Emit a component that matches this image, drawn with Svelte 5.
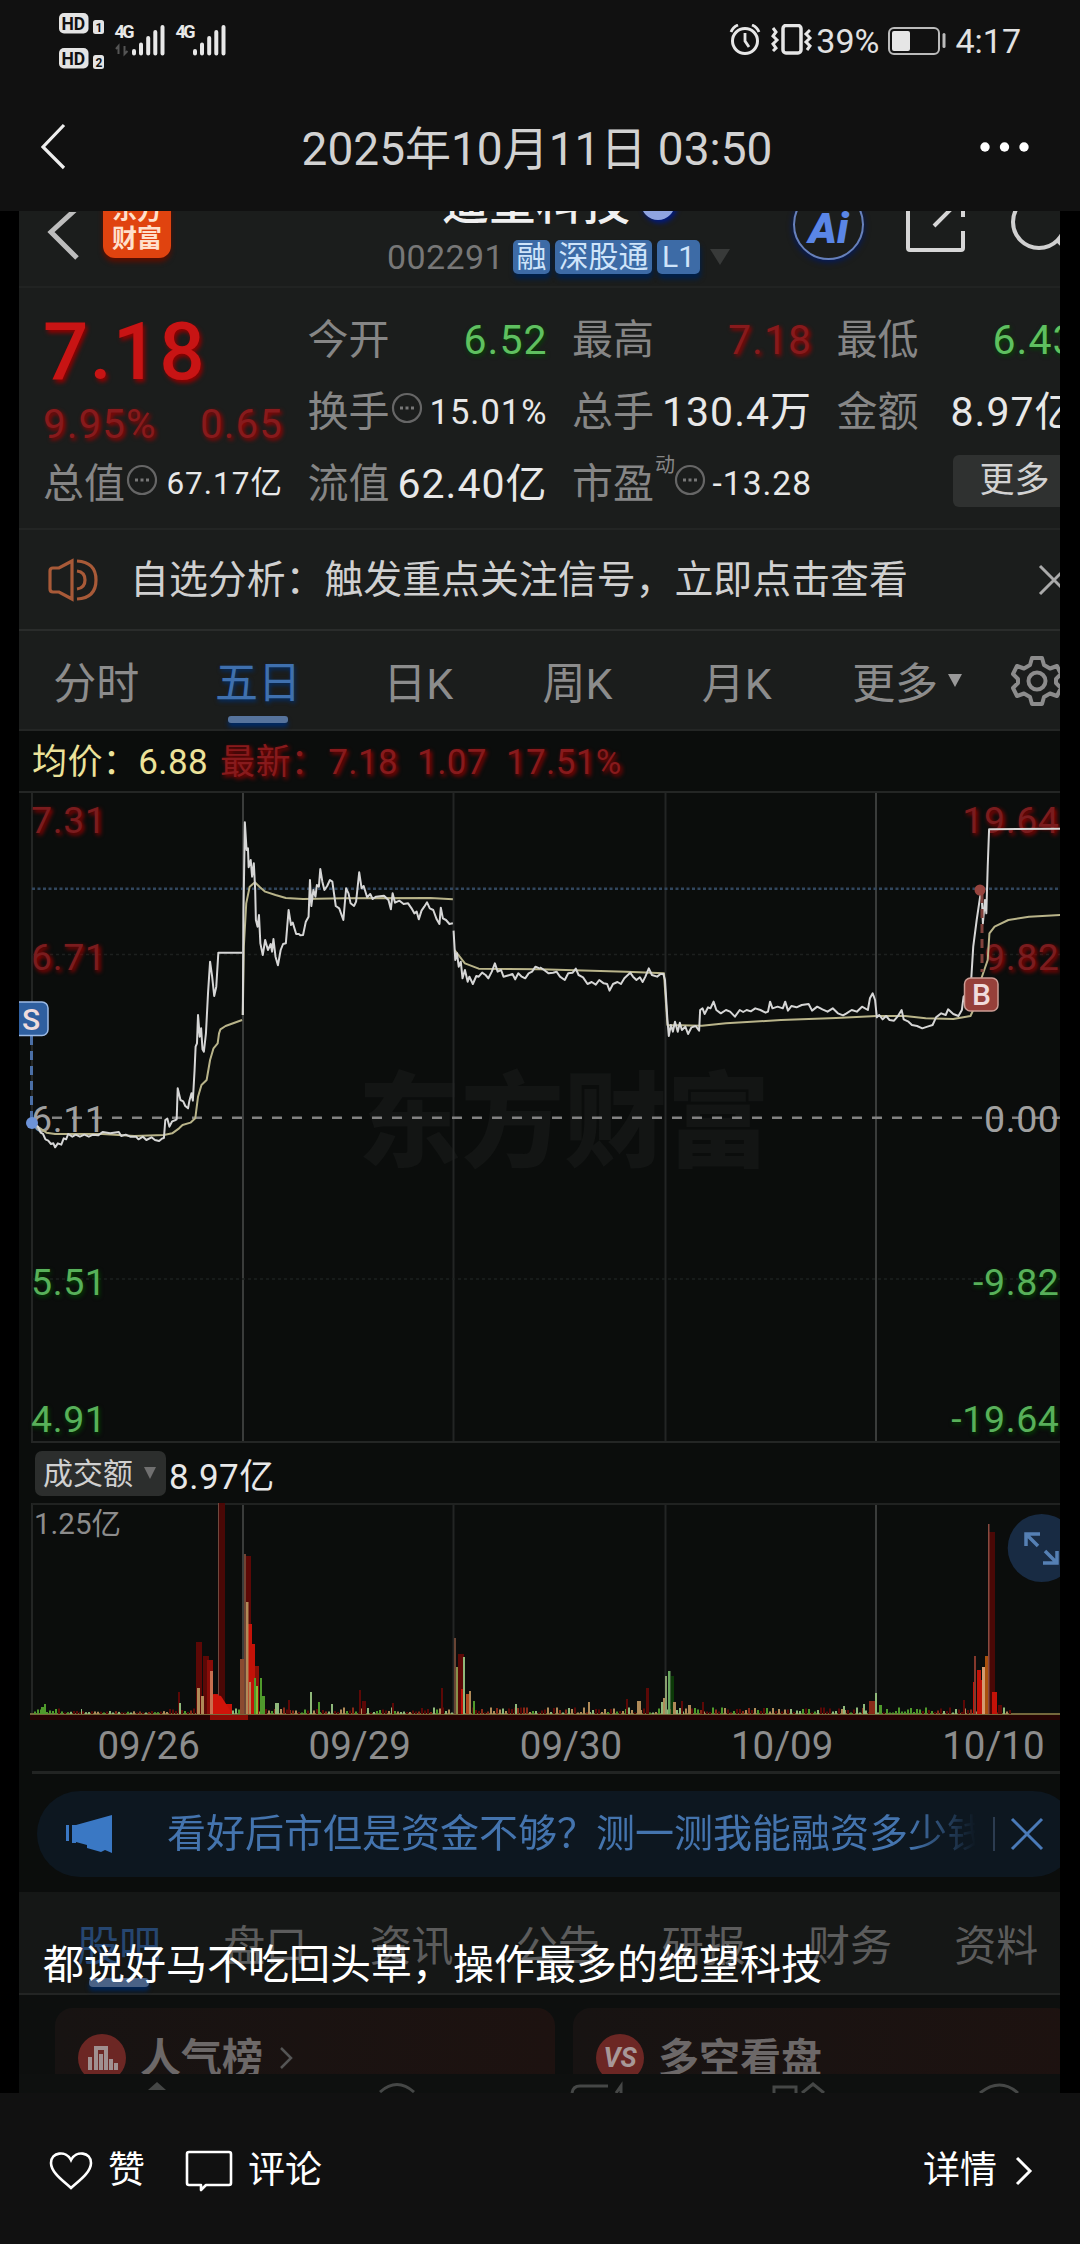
<script>
  const quotes = [
    { label: "今开", value: "6.52", tone: "down", size: 41 },
    { label: "最高", value: "7.18", tone: "up", size: 41 },
    { label: "最低", value: "6.43", tone: "down", size: 41 },
    { label: "换手", value: "15.01%", size: 34.5, info: true },
    { label: "总手", value: "130.4万", size: 41 },
    { label: "金额", value: "8.97亿", size: 41 },
    { label: "总值", value: "67.17亿", size: 31.5, info: true },
    { label: "流值", value: "62.40亿", size: 41 },
    { label: "市盈", value: "-13.28", size: 33.5, info: true, sup: "动" },
  ];

  const periods = ["分时", "五日", "日K", "周K", "月K", "更多"];
  const dates = ["09/26", "09/29", "09/30", "10/09", "10/10"];
  const sections = ["股吧", "盘口", "资讯", "公告", "研报", "财务", "资料"];

  const dayLines = [32, 243, 453.5, 665.5, 876];
  const leftScale = [
    ["7.31", 833, "up"],
    ["6.71", 970, "up"],
    ["6.11", 1132, "flat"],
    ["5.51", 1295, "down"],
    ["4.91", 1431.5, "down"],
  ];
  const rightScale = [
    ["19.64", 833, "up"],
    ["9.82", 970, "up"],
    ["0.00", 1132, "flat"],
    ["-9.82", 1295, "down"],
    ["-19.64", 1431.5, "down"],
  ];

  // each half of the chart is plotted on a 1568-unit wide grid
  const priceLeft = [
    "95,1030 110,1040 118,1058 125,1062 132,1078 140,1082 148,1092 155,1090 160,1102 168,1090 178,1094 185,1075 192,1078 198,1062 210,1070 220,1064 232,1070 245,1064 258,1070 270,1064 285,1066 298,1056 320,1060 345,1056 352,1068 365,1064 378,1070 395,1070 402,1078 415,1070 425,1080 440,1072 450,1080 462,1083 470,1076 476,1074 480,1020 486,1016 492,1040 500,1024 510,1020 513,1018 516,925 524,960 532,964 538,978 546,985 550,962 556,940 560,962 565,870 568,800 572,790 575,705 580,770 584,745 588,808 592,815 598,760 604,640 610,545 616,590 622,648 628,620 634,518 703,518",
    "705,705 707,400 711,127 716,210 720,205 722,262 728,240 732,290 737,250 741,330 743,420 748,440 752,405 756,490 763,525 770,480 778,510 786,492 790,515 794,477 800,530 807,556 815,510 822,492 830,490 838,390 845,435 850,428 860,462 868,462 872,466 880,465 888,425 896,410 900,300 904,378 910,330 916,350 920,315 926,320 930,267 936,305 942,330 950,318 958,300 965,305 975,378 985,385 997,420 1005,325 1012,340 1018,370 1028,378 1034,365 1043,277 1050,325 1056,318 1066,352 1075,342 1082,357 1092,350 1115,347 1128,360 1135,388 1140,340 1147,368 1160,362 1172,372 1185,370 1195,385 1203,400 1210,395 1216,418 1224,392 1232,380 1240,367 1248,385 1258,390 1268,418 1276,432 1280,383 1286,415 1295,420 1305,432 1315,430",
    "1317,452 1322,540 1327,520 1332,560 1338,545 1343,595 1350,570 1358,605 1363,590 1373,612 1383,588 1390,590 1400,578 1410,585 1418,595 1428,575 1437,550 1445,575 1455,570 1462,590 1480,585 1488,582 1496,598 1505,580 1515,590 1525,595 1535,580 1545,575 1555,560 1568,566",
  ];
  const priceRight = [
    "0,562 12,570 25,580 38,578 48,575 58,590 72,600 82,580 95,578 104,566 112,585 125,592 138,612 150,606 162,614 172,600 185,610 195,612 202,632 212,612 225,606 235,612 245,595 262,578 270,590 280,600 290,592 298,606 306,590 316,565 325,585 340,590 350,582 358,582 363,600 370,720 374,768 380,735 386,755 392,725 400,755 406,728 412,750 422,740 430,762 440,742 452,738 462,752 465,690 472,685 478,702 488,682 495,685 504,665 512,690 525,700 540,690 552,695 566,710 580,690 590,696 600,690 612,694 625,685 640,690 655,698 662,695 668,665 675,685 690,680 705,685 712,665 720,692 730,678 745,682 760,675 780,672 790,692 805,680 820,688 835,695 850,685 865,700 880,706 890,700 905,690 920,695 935,680 952,690 958,655 966,640 973,660 978,712 985,705 995,718 1005,708 1015,720 1028,722 1038,710 1050,690 1056,718 1070,725 1080,735 1095,738 1110,745 1125,740 1140,735 1150,712 1165,700 1178,705 1185,688 1200,702 1215,708 1225,690 1230,650 1240,640 1252,600 1258,500 1268,420 1278,350 1282,330 1286,430 1292,360 1296,400 1300,260 1304,148 1510,146",
  ];
  const avgLeft = [
    "95,1030 112,1042 135,1058 160,1062 298,1062 390,1068 476,1065 500,1060 520,1045 530,1035 553,1028 567,1015 575,950 585,915 600,900 610,840 620,805 632,790 636,760 640,748 655,738 703,720",
    "705,705 708,500 715,370 725,320 740,307 755,322 770,335 800,345 830,354 880,357 1000,355 1250,354 1315,358",
    "1320,510 1350,550 1390,566 1568,568",
  ];
  const avgRight = [
    "0,568 250,575 360,580 370,735 470,737 540,730 700,720 860,714 978,708 1060,708 1120,715 1200,717 1250,708 1258,690 1280,600 1300,540 1305,460 1320,440 1360,420 1420,410 1510,405",
  ];

  // x, height, width, colour
  const R = "#c41208", D = "#5c0806", T = "#b08a58", G = "#4f9a2c", L = "#8fb87a";
  const spikes = [
    [44, 10, 2, G], [41, 7, 4, G], [81, 5, 1, L],
    [178, 22, 2, D], [179, 11, 2, L],
    [196, 72, 6, D], [203, 58, 6, D], [197, 26, 3, T], [201, 18, 3, T],
    [207, 54, 6, "#8a0c08"], [210, 43, 3, "#c87050"], [214, 20, 10, R], [224, 10, 8, R],
    [219, 212, 6, "#4a0806"], [218, 212, 1, "#70483e"],
    [240, 55, 4, "#8a4a30"], [245, 158, 6, D], [244, 160, 2, "#704434"],
    [248, 90, 4, R], [251, 70, 4, R], [255, 48, 4, "#8a1008"], [246, 112, 2.5, T],
    [249, 32, 2, T], [254, 36, 2, G], [256, 28, 2, "#8ab832"], [260, 36, 2, G], [262, 18, 3, G],
    [275, 11, 4, L], [288, 14, 2, D], [310, 22, 2, L], [318, 12, 2, G], [331, 10, 2, L],
    [359, 24, 2, D], [362, 13, 4, D], [392, 11, 2, D], [441, 26, 2, D],
    [454, 76, 2, "#684434"], [458, 60, 6, D], [456, 47, 2, "#88904c"], [461, 25, 4, R],
    [463, 57, 2, L], [466, 20, 3, "#b04a20"], [469, 23, 2, T], [473, 13, 2, G], [515, 10, 2, L],
    [588, 12, 2, T], [626, 15, 2, D], [637, 13, 4, T], [646, 26, 3, D], [661, 12, 2, L], [663, 16, 3, T],
    [665, 38, 2, "#8aa070"], [668, 43, 2.5, "#6aa860"], [671, 38, 3, "#0c3a08"], [673, 12, 3, T], [681, 13, 2, D], [688, 9, 3, T], [702, 12, 2, D],
    [843, 8, 2, L], [863, 10, 2, L], [869, 13, 6, "#8a2a18"], [875, 21, 2, L], [879, 9, 3, G],
    [963, 14, 2, D], [973, 32, 3, R], [974, 58, 2, "#84382c"], [977, 44, 4, R], [980, 34, 4, R],
    [982, 47, 3, "#d49a70"], [985, 58, 4, "#a8500e"], [989, 182, 6, "#4a0806"], [988, 190, 1.5, "#8a4a40"], [992, 22, 5, R], [998, 9, 4, D],
  ];
  const noise = [];
  let seed = 7;
  for (let x = 34; x < 1010; x += 3) {
    seed = (seed * 73 + 41) % 997;
    const tone = x < 54 ? G : x > 885 && x < 920 ? G : [D, T, L, D, "#8a2a18", G][seed % 6];
    const tall = x > 60 && x < 165 ? 0.15 : 0.5;
    noise.push([x, 1.5 + (seed % 11) * tall, 2, tone]);
  }
</script>

<div class="screen">
  <header class="status">
    <svg class="radios" width="180" height="72" viewBox="54 0 180 72">
      {#each [[13, "1"], [48, "2"]] as [y, n]}
        <rect x="59" {y} width="29.500" height="20.500" rx="5" fill="#e4e4e4" />
        <text x="61.500" y={y + 16.5} class="hd">HD</text>
        <rect x="93" y={y + 7} width="11" height="14" rx="2.500" fill="#e4e4e4" />
        <text x="95.500" y={y + 18.5} class="sim">{n}</text>
      {/each}
      {#each [0, 61] as dx}
        <text x={114.5 + dx} y="38" class="net">4G</text>
        <path
          transform="translate({dx})"
          d="M134 51v2.500M141 44.500v9M148.200 38v15.500M155.300 32v21.500M162.500 27v26.500"
          stroke="#e8e8e8" stroke-width="4" stroke-linecap="round" />
      {/each}
      <path d="M118.500 54V46l-2.500 3M124.500 46v8l3-3" stroke="#555" stroke-width="2" fill="none" />
    </svg>
    <div class="power">
      <svg width="84" height="34" viewBox="729 25 84 34" fill="none" stroke="#e6e6e6">
        <circle cx="745" cy="42" r="12.500" stroke-width="3" />
        <path d="M745 34v8l4 6M731 33q2-5 7-7M759 33q-2-5-7-7" stroke-width="2.800" />
        <rect x="783" y="26.500" width="18" height="27.500" rx="3" stroke-width="3.500" />
        <path d="M773 29l3 4-3 4 4 4-4 4 3 4-3 3M810 31l-4 4 4 4-4 4 4 4-3 4" stroke-width="3" />
      </svg>
      <span>39%</span>
      <svg width="60" height="30" viewBox="889 26 60 30">
        <rect x="890" y="28" width="50" height="26" rx="5" fill="none" stroke="#bbb" stroke-width="2" />
        <rect x="893" y="31" width="18" height="20" rx="2" fill="#e6e6e6" />
        <rect x="943.500" y="33" width="3" height="15" rx="1.500" fill="#bbb" />
      </svg>
      <span>4:17</span>
    </div>
  </header>

  <nav class="topbar">
    <svg width="30" height="52" viewBox="0 0 30 52"><path d="M26 4L5 26l21 21" fill="none" stroke="#eee" stroke-width="3.200" /></svg>
    <h1>2025年10月11日 03:50</h1>
    <svg width="50" height="12" viewBox="0 0 50 12" fill="#fff"><circle cx="5" cy="6" r="4.700" /><circle cx="24.500" cy="6" r="4.700" /><circle cx="44" cy="6" r="4.700" /></svg>
  </nav>

  <main class="photo">
    <div class="apphead">
      <svg class="back" width="34" height="50" viewBox="0 0 34 50"><path d="M28 -2L4 20l26 26" fill="none" stroke="#bdbdbd" stroke-width="5" /></svg>
      <div class="logo">东方<br />财富</div>
      <div class="stock">
        <div class="name">遥望科技<i></i></div>
        <div class="code">
          <span>002291</span><b>融</b><b>深股通</b><b>L1</b>
          <svg width="20" height="16" viewBox="0 0 20 16"><path d="M0 0h20L10 16z" fill="#383a39" /></svg>
        </div>
      </div>
      <div class="ai">Ai</div>
      <svg class="share" width="62" height="70" viewBox="0 0 62 70" fill="none" stroke="#d6d6d6" stroke-width="4"><path d="M30 12H5q-2 0-2 3v50q0 2 2 2h51q2 0 2-2V48M29 43L58 14M42 12h16v22" /></svg>
      <svg class="search" width="70" height="70" viewBox="0 0 70 70" fill="none" stroke="#d0d0d0" stroke-width="4"><circle cx="30" cy="30" r="26" /><path d="M48 48l14 14" /></svg>
    </div>

    <section class="quotes">
      <div class="last">
        <strong>7.18</strong>
        <p><span>9.95%</span><span>0.65</span></p>
      </div>
      {#each quotes as q}
        <div class="quote">
          <span class="label">{q.label}</span>
          {#if q.sup}<sup>{q.sup}</sup>{/if}
          {#if q.info}
            <svg class="info" width="32" height="32" viewBox="0 0 32 32"><circle cx="16" cy="16" r="14" fill="none" stroke="#666" stroke-width="2.200" /><path d="M9 16h3M14.500 16h3M20 16h3" stroke="#777" stroke-width="3" /></svg>
          {/if}
          <span class="value {q.tone}" style="font-size:{q.size}px">{q.value}</span>
        </div>
      {/each}
      <div class="more"><button>更多</button></div>
    </section>

    <section class="notice">
      <svg width="54" height="44" viewBox="0 0 54 44" fill="none" stroke="#a85a38" stroke-width="3.200">
        <path d="M3 13q0-3 3-3h6L25 3v38L12 34H6q-3 0-3-3z" /><path d="M30 13q8 1 8 9t-8 9M30 3q19 1 19 19T30 41" />
      </svg>
      <p>自选分析：触发重点关注信号，立即点击查看</p>
      <svg width="32" height="32" viewBox="0 0 32 32"><path d="M2 2l28 28M30 2L2 30" stroke="#aaa" stroke-width="3" /></svg>
    </section>

    <section class="periods">
      {#each periods as p, i}
        <div class="period" class:active={i === 1}>
          <span>{p}</span>
          {#if i === 5}<svg width="14" height="13" viewBox="0 0 14 13"><path d="M0 0h14L7 13z" fill="#999" /></svg>{/if}
        </div>
      {/each}
      <svg width="52" height="52" viewBox="-26 -26 52 52" fill="none" stroke="#8c8c8c" stroke-width="4">
        <circle r="8.500" />
        <path d="M-5-23H5L7-16L13-12.500L20-15L24-7L19-2V2L24 7L20 15L13 12.500L7 16L5 23H-5L-7 16L-13 12.500L-20 15L-24 7L-19 2V-2L-24-7L-20-15L-13-12.500L-7-16Z" stroke-linejoin="round" />
      </svg>
    </section>

    <p class="summary"><span class="avg">均价：6.88</span><span class="up latest">最新：</span><span class="up">7.18</span><span class="up">1.07</span><span class="up">17.51%</span></p>

    <svg class="chart" width="1041" height="652" viewBox="19 791 1041 652">
      <text x="358" y="1159" class="mark">东方财富</text>
      {#each dayLines as x, i}
        <path d="M{x} 791V1443" stroke={i === 1 || i === 4 ? "#3a3c3b" : "#232524"} stroke-width="2" />
      {/each}
      <path d="M19 792H1060M32 1442H1060" stroke="#242625" stroke-width="2" />
      <path d="M32 888.700H1060" stroke="#31465e" stroke-width="2.500" stroke-dasharray="3 2.500" />
      <path d="M32 954.500H1060M32 1279H1060" stroke="#1d201f" stroke-width="1.500" stroke-dasharray="3 3" />
      <path d="M52 1117.700H1060" stroke="#828282" stroke-width="2.500" stroke-dasharray="10 10" />
      {#each leftScale as [label, y, tone]}
        <text x="31" {y} class="scale {tone}">{label}</text>
      {/each}
      {#each rightScale as [label, y, tone]}
        <text x="1059.500" {y} class="scale end {tone}">{label}</text>
      {/each}
      <g class="lines" transform="translate(0 780) scale(0.34439 0.33333)">
        {#each avgLeft as points}<polyline class="mean" {points} />{/each}
        {#each priceLeft as points}<polyline {points} />{/each}
      </g>
      <g class="lines" transform="translate(540 780) scale(0.34439 0.33333)">
        {#each avgRight as points}<polyline class="mean" {points} />{/each}
        {#each priceRight as points}<polyline {points} />{/each}
      </g>
      <path d="M31.500 1036V1120" stroke="#4b6fa6" stroke-width="3" stroke-dasharray="9 6" />
      <circle cx="32" cy="1123" r="6" fill="#6d93d8" />
      <rect x="10" y="1002" width="38" height="33.500" rx="6" fill="#2f5f9f" stroke="#9dbbe6" stroke-width="1.500" />
      <text x="31" y="1029.500" class="flag">S</text>
      <path d="M982 894V972" stroke="#80423c" stroke-width="3" stroke-dasharray="9 6" />
      <circle cx="980" cy="890" r="5.500" fill="#96443e" />
      <rect x="964.500" y="978" width="33.500" height="33" rx="6" fill="#96403a" stroke="#cc9c94" stroke-width="1.500" />
      <text x="981.500" y="1005" class="flag">B</text>
    </svg>

    <div class="turnover">
      <span class="pick">成交额<svg width="12" height="12" viewBox="0 0 12 12"><path d="M0 0h12L6 12z" fill="#707070" /></svg></span>
      <span>8.97亿</span>
    </div>

    <svg class="volume" width="1041" height="217" viewBox="19 1503 1041 217">
      {#each dayLines as x, i}
        <path d="M{x} 1503V1714" stroke={i === 1 || i === 4 ? "#3a3c3b" : "#232524"} stroke-width="2" />
      {/each}
      <path d="M32 1504H1060" stroke="#202221" stroke-width="2" />
      <rect x="30" y="1715" width="1030" height="5" fill="#260403" />
      <rect x="210" y="1715" width="38" height="5" fill="#8a0c06" />
      <rect x="30" y="1713" width="1030" height="2" fill="#75683c" />
      {#each [...noise, ...spikes] as [x, h, w, fill]}
        <rect {x} y={1714 - h} width={w} height={h} {fill} />
      {/each}
      <path d="M213 1714V1694L221 1696L230 1710V1714Z" fill="#d0140a" />
      <text x="34" y="1534" class="peak">1.25亿</text>
      <circle cx="1041.700" cy="1548" r="34" fill="#182b43" />
      <path d="M1026 1546V1534h14M1027 1535l11 11M1057 1551v12h-14M1056 1562l-11-11" fill="none" stroke="#5580b4" stroke-width="3.500" />
    </svg>

    <div class="dates">
      {#each dates as d}<span>{d}</span>{/each}
    </div>

    <div class="promo">
      <svg width="48" height="40" viewBox="0 0 48 40" fill="#3a78c4"><path d="M0 11h3v16H0zM6 11h4v18H6zM10 11L46 1v38l-7-3-4 2-14-4v-3L10 28z" /></svg>
      <p>看好后市但是资金不够？测一测我能融资多少钱</p>
      <i></i>
      <svg width="34" height="34" viewBox="0 0 34 34"><path d="M2 2l30 30M32 2L2 32" stroke="#4a7ab8" stroke-width="3" /></svg>
    </div>

    <div class="sections">
      {#each sections as s, i}<span class:active={i === 0}>{s}</span>{/each}
      <p class="caption">都说好马不吃回头草，操作最多的绝望科技</p>
    </div>

    <div class="cards">
      <div class="card">
        <svg width="48" height="48" viewBox="0 0 48 48"><circle cx="24" cy="24" r="24" fill="#6c2724" /><path d="M12 36V23M18 36V14h10v22M23 20v16M33 36V25M38 36v-7" fill="none" stroke="#a09090" stroke-width="4" /></svg>
        <span>人气榜</span>
        <svg width="14" height="24" viewBox="0 0 14 24"><path d="M2 2l10 10L2 22" fill="none" stroke="#555" stroke-width="2.500" /></svg>
      </div>
      <div class="card">
        <div class="vs">VS</div>
        <span>多空看盘</span>
      </div>
    </div>
    <svg class="tabbar" width="1041" height="19" viewBox="19 2074 1041 19" fill="none" stroke="#454746" stroke-width="3">
      <path d="M148 2090l9-8 9 8z" fill="#454746" stroke="none" />
      <path d="M380 2092q17-15 34 0M572 2093q1-7 8-7h28M616 2093l5-7v7M774 2093v-6h22v6M802 2093l11-9 11 9M980 2093q20-16 38 0" />
    </svg>
  </main>

  <footer>
    <svg width="44" height="40" viewBox="0 0 44 40"><path d="M22 37C13 29 2 21 2 12C2 1 17-1 22 9C27-1 42 1 42 12C42 21 31 29 22 37z" fill="none" stroke="#fff" stroke-width="2.600" /></svg>
    <span class="like">赞</span>
    <svg width="48" height="42" viewBox="0 0 48 42"><path d="M4 2H44q2 0 2 2V33q0 2-2 2H21l-5 5v-5H4q-2 0-2-2V4q0-2 2-2z" fill="none" stroke="#fff" stroke-width="2.600" stroke-linejoin="round" /></svg>
    <span class="comment">评论</span>
    <span class="detail">详情</span>
    <svg width="18" height="30" viewBox="0 0 18 30"><path d="M2 2l13 13L2 28" fill="none" stroke="#fff" stroke-width="3" /></svg>
  </footer>
</div>

<style>
  :global(body) {
    background: #000;
  }
  .screen {
    width: 1080px;
    height: 2244px;
    overflow: hidden;
    background: #000;
    color: #e8e8e8;
    font-family: Roboto, "Noto Sans CJK SC", sans-serif;
  }
  svg {
    display: block;
    flex: none;
  }
  p,
  h1 {
    margin: 0;
  }

  /* system bar and title */
  .status {
    height: 82px;
    background: #111;
    display: flex;
    justify-content: space-between;
    align-items: flex-start;
    padding: 0 59px 0 54px;
  }
  .hd {
    font-size: 17.5px;
    font-weight: 700;
    fill: #111;
  }
  .sim {
    font-size: 12px;
    font-weight: 700;
    fill: #111;
  }
  .net {
    font-size: 18px;
    font-weight: 700;
    fill: #e8e8e8;
    letter-spacing: -2.5px;
  }
  .power {
    display: flex;
    align-items: center;
    height: 82px;
    font-size: 34px;
    color: #e2e2e2;
  }
  .power span:nth-of-type(1) {
    margin: 0 9px 0 3px;
  }
  .power span:nth-of-type(2) {
    margin-left: 7px;
  }
  .topbar {
    height: 129px;
    box-sizing: border-box;
    background: #111;
    display: flex;
    justify-content: space-between;
    align-items: center;
    padding: 0 50px 0 38px;
  }
  .topbar h1 {
    font-size: 46px;
    font-weight: 400;
    color: #d2d2d2;
    line-height: 60px;
    padding: 5px 0 0 26px;
  }

  .photo {
    margin: 0 20px 0 19px;
    height: 1882px;
    overflow: hidden;
    background: #0b0d0c;
    display: flex;
    flex-direction: column;
  }
  .up {
    color: #871a1c;
    fill: #7a1c1e;
    text-shadow: 2px 2px 4px #a00000;
  }
  .down {
    color: #5fc060;
    fill: #58b05a;
    text-shadow: 1px 2px 4px #004800;
  }
  .flat {
    fill: #a0a0a0;
  }

  /* app header, its upper part runs out of view */
  .apphead {
    height: 77px;
    flex: none;
    box-sizing: border-box;
    background: #1b1d1c;
    border-bottom: 2px solid #212322;
    display: flex;
    align-items: flex-end;
    overflow: hidden;
  }
  .back {
    margin: 0 22px 24px 28px;
  }
  .logo {
    flex: none;
    width: 68px;
    height: 68px;
    margin-bottom: 28px;
    border-radius: 12px;
    background: #e0430f;
    color: #ffe0cc;
    font-size: 25px;
    font-weight: 700;
    line-height: 28px;
    text-align: center;
    padding-top: 7px;
    box-sizing: border-box;
    box-shadow: 0 4px 5px #5a0f00;
  }
  .stock {
    width: 345px;
    margin: 0 0 11px 216px;
    flex: none;
  }
  .name {
    display: flex;
    align-items: center;
    font-size: 47px;
    line-height: 52px;
    font-weight: 500;
    color: #f0f0f0;
    padding-left: 55px;
    margin-bottom: 10px;
  }
  .name i {
    width: 34px;
    height: 34px;
    border-radius: 50%;
    background: #8fa4e0;
    margin: 0 0 1px 11px;
    box-shadow: 2px 3px 5px #001a80;
  }
  .code {
    display: flex;
    align-items: center;
    height: 36px;
    color: #777;
    font-size: 34px;
  }
  .code span {
    width: 126px;
    letter-spacing: 0.4px;
  }
  .code b {
    background: #3d6ba6;
    color: #cfe4fa;
    font-weight: 400;
    font-size: 30px;
    line-height: 34px;
    border-radius: 5px;
    padding: 0 3.5px;
    margin-right: 5px;
    box-shadow: 1px 5px 5px #00204a;
  }
  .code b:nth-of-type(3) {
    padding: 0 5px;
  }
  .code svg {
    margin-left: 5px;
  }
  .ai {
    flex: none;
    width: 67px;
    height: 67px;
    margin: 0 0 26px 61px;
    border: 2.5px solid #6680bc;
    border-radius: 50%;
    color: #5a86e6;
    font: italic 900 43px/74px Roboto, sans-serif;
    text-align: center;
    box-shadow: 0 2px 6px #001a66;
  }
  .share {
    margin: 0 0 33px 41px;
  }
  .search {
    margin: 0 0 24px 42px;
  }

  .quotes {
    height: 242px;
    flex: none;
    box-sizing: border-box;
    padding: 16px 0 0 24px;
    background: #1b1d1c;
    border-bottom: 2px solid #232524;
    display: grid;
    grid-template-columns: repeat(4, 240px);
    grid-template-rows: repeat(3, 72px);
    column-gap: 24.5px;
  }
  .last {
    grid-row: 1 / 3;
  }
  .last strong {
    display: block;
    font-size: 80px;
    line-height: 96px;
    font-weight: 500;
    color: #c81414;
    text-shadow: 2px 3px 4px #900000;
    letter-spacing: 1px;
  }
  .last p {
    display: flex;
    justify-content: space-between;
    font-size: 40.5px;
    line-height: 48px;
    color: #871a1c;
    text-shadow: 2px 2px 4px #a00000;
    letter-spacing: 1px;
  }
  .quote {
    display: flex;
    align-items: center;
    white-space: nowrap;
  }
  .label {
    font-size: 41px;
    line-height: 60px;
    color: #868686;
  }
  .quote sup {
    font-size: 20px;
    line-height: 24px;
    margin: 0 -2px 38px 1px;
    color: #868686;
  }
  .info {
    margin: 0 0 9px 1px;
  }
  .value {
    margin-left: auto;
    line-height: 60px;
    letter-spacing: 1px;
  }
  .more {
    display: flex;
    justify-content: flex-end;
    align-items: center;
  }
  .more button {
    width: 124px;
    height: 52px;
    padding: 0;
    border: 0;
    border-radius: 6px;
    background: #2f3130;
    color: #d2d2d2;
    font: 35px/52px Roboto, "Noto Sans CJK SC", sans-serif;
    margin-bottom: 6px;
  }

  .notice {
    height: 101px;
    flex: none;
    box-sizing: border-box;
    background: #1b1d1c;
    border-bottom: 2px solid #2a2c2b;
    display: flex;
    align-items: center;
    padding-left: 28px;
  }
  .notice p {
    width: 908px;
    margin-left: 29px;
    flex: none;
    font-size: 38.9px;
    line-height: 60px;
    padding-top: 1px;
    color: #d0d0d0;
  }

  .periods {
    height: 100px;
    flex: none;
    box-sizing: border-box;
    background: #1b1d1c;
    border-bottom: 2px solid #242625;
    display: grid;
    grid-template-columns: repeat(6, 159.3px) 80px;
  }
  .periods > svg {
    margin: 24px 0 0 36px;
  }
  .period {
    display: flex;
    align-items: center;
    justify-content: center;
    gap: 10px;
    font-size: 43px;
    line-height: 60px;
    color: #8c8c8c;
    padding: 7px 5px 0 0;
  }
  .period:nth-child(n + 3) {
    padding: 7px 0 0 2px;
  }
  .period:nth-child(6) {
    padding-left: 24px;
  }
  .period:nth-child(6) svg {
    margin-bottom: 6px;
  }
  .period.active {
    display: grid;
    justify-items: center;
    align-content: end;
    gap: 3px;
    padding: 0 0 6px;
    color: #3f70ae;
    text-shadow: 1px 2px 4px #003070;
  }
  .period.active::after {
    content: "";
    width: 60px;
    height: 7px;
    border-radius: 3px;
    background: #56739c;
    box-shadow: 0 4px 4px #002a66;
  }

  .summary {
    height: 60px;
    flex: none;
    display: flex;
    padding-left: 13px;
    font-size: 35px;
    line-height: 63px;
    white-space: nowrap;
    letter-spacing: 0.4px;
  }
  .avg {
    color: #ece29a;
    margin-right: 12px;
  }
  .summary .up {
    margin-right: 19px;
  }
  .summary .latest {
    margin-right: 2px;
  }

  .scale {
    font-size: 37.5px;
    letter-spacing: 0.6px;
  }
  .end {
    text-anchor: end;
  }
  .mark {
    font-size: 103px;
    font-weight: 900;
    fill: #131514;
  }
  .lines polyline {
    fill: none;
    stroke: #d6d6d6;
    stroke-width: 2px;
    stroke-linejoin: round;
    vector-effect: non-scaling-stroke;
  }
  .lines .mean {
    stroke: #b9b48a;
  }
  .flag {
    font-size: 30px;
    font-weight: 500;
    fill: #f0dcdc;
    text-anchor: middle;
  }

  .turnover {
    height: 60px;
    flex: none;
    display: flex;
    align-items: center;
    padding-left: 16px;
    gap: 3px;
    font-size: 35px;
    letter-spacing: 0.5px;
  }
  .pick {
    box-sizing: border-box;
    width: 131px;
    height: 45px;
    line-height: 45px;
    border-radius: 7px;
    background: #2c2e2d;
    padding: 0 10px 0 8px;
    display: flex;
    align-items: center;
    justify-content: space-between;
    font-size: 30px;
    letter-spacing: 0;
    color: #d0d0d0;
  }
  .peak {
    font-size: 29.5px;
    fill: #8c8c8c;
  }
  .dates {
    height: 54px;
    flex: none;
    box-sizing: border-box;
    margin-left: 13px;
    padding-left: 11px;
    border-bottom: 3px solid #222423;
    display: grid;
    grid-template-columns: repeat(5, 211.2px);
    text-align: center;
    font-size: 38.5px;
    line-height: 51px;
    color: #8c8c8c;
  }

  .promo {
    flex: none;
    box-sizing: border-box;
    width: 1039px;
    height: 86px;
    margin: 17px 0 15px 18px;
    border-radius: 43px;
    background: #0d1720;
    display: flex;
    align-items: center;
    padding-left: 29px;
  }
  .promo p {
    width: 809px;
    flex: none;
    overflow: hidden;
    white-space: nowrap;
    margin: 0 17px 0 53px;
    font-size: 39px;
    line-height: 60px;
    color: #4474ae;
    mask-image: linear-gradient(90deg, #000 92%, transparent);
  }
  .promo i {
    width: 2px;
    height: 34px;
    margin-right: 15px;
    background: #2c3c50;
  }

  .sections {
    height: 103px;
    flex: none;
    box-sizing: border-box;
    position: relative;
    background: #151716;
    border-bottom: 2px solid #232524;
    display: grid;
    grid-template-columns: repeat(7, 146.2px);
    padding-left: 27px;
    text-align: center;
    font-size: 42px;
    line-height: 109px;
    color: #5c5c5c;
  }
  .sections .active {
    color: #264670;
  }
  .sections .active::after {
    content: "";
    display: block;
    width: 60px;
    height: 9px;
    margin: -23px auto 0;
    border-radius: 4px;
    background: #4a6286;
    box-shadow: 0 4px 4px #002454;
  }
  /* post text laid over the picture */
  .caption {
    position: absolute;
    left: 24px;
    top: 43px;
    font-size: 41px;
    line-height: 60px;
    color: #fff;
    white-space: nowrap;
  }
  .cards {
    height: 79px;
    flex: none;
    box-sizing: border-box;
    padding: 13px 0 0 36px;
    display: flex;
    gap: 18px;
    overflow: hidden;
    background: #0d0f0e;
  }
  .card {
    flex: none;
    width: 500px;
    height: 100px;
    box-sizing: border-box;
    border-radius: 18px 18px 0 0;
    background: linear-gradient(90deg, #171312, #1d1210);
    display: flex;
    align-items: flex-start;
    padding: 26px 0 0 23px;
    font-size: 41px;
    line-height: 51px;
    font-weight: 700;
    color: #6c6868;
  }
  .card span {
    margin: 0 16px 0 14px;
  }
  .card svg:last-child {
    margin-top: 12px;
  }
  .vs {
    width: 48px;
    height: 48px;
    border-radius: 50%;
    background: #6c2724;
    color: #a89898;
    font: italic 700 27px/48px Roboto, sans-serif;
    text-align: center;
  }
  .tabbar {
    background: #0e100f;
  }

  footer {
    height: 151px;
    box-sizing: border-box;
    background: #111;
    display: flex;
    align-items: center;
    padding: 4px 47px 0 49px;
    font-size: 37px;
    line-height: 50px;
    color: #fff;
  }
  .like {
    margin: 0 40px 0 15px;
  }
  .comment {
    margin-left: 15px;
  }
  .detail {
    margin: 0 18px 0 auto;
  }
</style>
